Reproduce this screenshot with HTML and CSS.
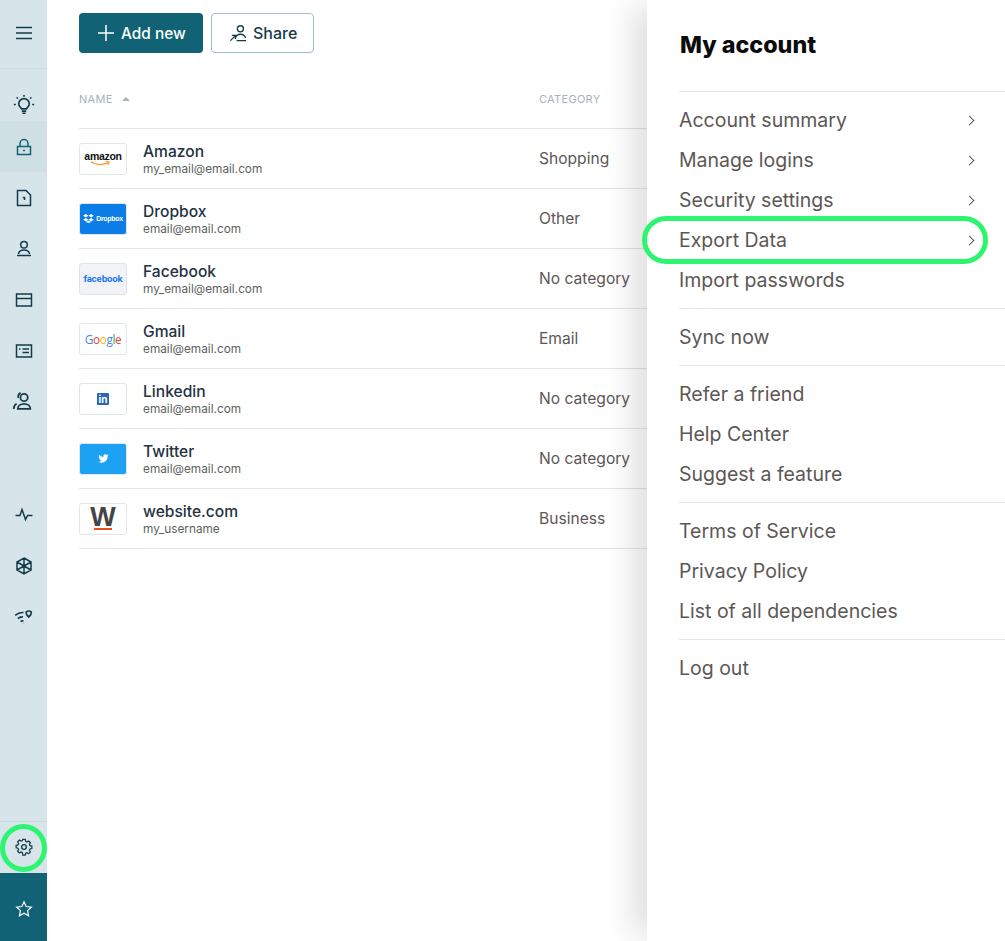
FILE: index.html
```html
<!DOCTYPE html>
<html lang="en">
<head>
    <meta charset="UTF-8">
    <meta name="viewport" content="width=device-width, initial-scale=1.0">
    <title>Logins</title>
    <link rel="stylesheet" href="styles.css">
</head>
<body>
    <nav class="sidebar">
        <div class="side-top">
            <svg class="ico" viewBox="0 0 22 22"><path d="M3 5.500h16M3 11h16M3 16.500h16"/></svg>
        </div>
        <div class="side-group">
            <div class="side-item first">
                <svg class="ico" viewBox="0 0 20 20"><path d="M7.800 13.500c-.2-1-2.600-2-2.600-4.500a4.800 4.800 0 0 1 9.600 0c0 2.500-2.400 3.500-2.600 4.500z"/><path d="M8 15.500h4M8.500 17.500h3M10 .8v1.800M3.300 3l1.100 1.100M16.700 3l-1.100 1.100M.8 9.500h1.800M17.400 9.500h1.800"/></svg>
            </div>
            <div class="side-item active">
                <svg class="ico" viewBox="0 0 22 22"><path d="M4.500 10.500h13v8h-13zM7 10.500V7.500a4 4 0 0 1 8 0v3M10 14.500h2"/></svg>
            </div>
            <div class="side-item">
                <svg class="ico" viewBox="0 0 22 22"><path d="M4.500 3.500h8.500l4.500 4.500v10.500h-13zM9.800 10.500h1.700v2.500"/></svg>
            </div>
            <div class="side-item">
                <svg class="ico" viewBox="0 0 22 22"><circle cx="11" cy="6.800" r="3.300"/><path d="M5.500 16c.3-2.500 2.500-4 5.500-4s5.200 1.500 5.500 4M4 17.500h14"/></svg>
            </div>
            <div class="side-item">
                <svg class="ico" viewBox="0 0 22 22"><path d="M3.500 5h15v12h-15zM3.500 9.500h15M6 9.500h2"/></svg>
            </div>
            <div class="side-item">
                <svg class="ico" viewBox="0 0 22 22"><path d="M3.500 5h15v12h-15zM6 9h1.500M9.500 9H16M9.500 12.500H16M18.500 5v12"/></svg>
            </div>
            <div class="side-item">
                <svg class="ico ico-lg" viewBox="0 0 20 20"><circle cx="10.500" cy="6.500" r="3.200"/><path d="M5 16.500c0-2.800 2.500-4.500 5.500-4.500s5.500 1.700 5.500 4.500zM7.500 2.500C5.500 3.500 5 5 5.500 7M1.500 16.500c0-2 .8-3.500 2.500-4.500"/></svg>
            </div>
        </div>
        <div class="side-group lower">
            <div class="side-item">
                <svg class="ico" viewBox="0 0 22 22"><path d="M2.500 11.500h4.500l2-6 3.500 10 2-4h5"/></svg>
            </div>
            <div class="side-item">
                <svg class="ico" viewBox="0 0 22 22"><path d="M11 3l7 4v8l-7 4-7-4V7zM11 11V3M11 11l7 4M11 11l-7 4M11 11L4 7M11 11l7-4M11 11v8"/></svg>
            </div>
            <div class="side-item">
                <svg class="ico ico-lg" viewBox="0 0 22 22"><path d="M3 10c2.500-2.200 5.500-3 8-2.800M5.500 13c1.500-1.300 3.300-1.800 5-1.600M8.200 15.800c.8-.6 1.800-.8 2.800-.5M11 18v.1M13.500 6.500c1.500-1 3.500-1 5 0 0 2.500-1 4-2.500 5-1.500-1-2.500-2.500-2.500-5z"/></svg>
            </div>
        </div>
        <div class="side-settings">
            <svg class="ico gear" viewBox="0 0 20 20"><circle cx="10" cy="10" r="2.600"/><path d="M8.500 2h3l.5 2.300 1.600.7 2-1.200 2.100 2.100-1.200 2 .7 1.600 2.300.5v3l-2.300.5-.7 1.600 1.200 2-2.100 2.100-2-1.200-1.600.7-.5 2.300h-3L8 17.700 6.400 17l-2 1.200-2.100-2.100 1.200-2-.7-1.600L.5 12V9l2.300-.5.7-1.600-1.200-2 2.100-2.100 2 1.200L8 3.300z" transform="translate(.8 -.2) scale(.92)"/></svg>
            <span class="ring-dot"></span>
        </div>
        <div class="side-star">
            <svg class="ico" viewBox="0 0 20 20"><path d="M10 2l2.400 5.300 5.800.6-4.300 3.900 1.200 5.700-5.100-2.900-5.100 2.900 1.200-5.700-4.300-3.900 5.800-.6z"/></svg>
        </div>
    </nav>

    <main class="content">
        <div class="actions">
            <button class="btn btn-primary">
                <svg class="btn-plus" viewBox="0 0 16 16"><path d="M8 0v16M0 8h16"/></svg>
                Add new
            </button>
            <button class="btn btn-outline">
                <svg class="btn-share" viewBox="0 0 20 20"><circle cx="12" cy="5" r="3.200"/><path d="M7 14c.6-2 2.500-3.200 5-3.200s4.400 1.200 5.500 3.700M8 17.500h10M1.500 17.500l5-5M3 12h3.800v3.800"/></svg>
                Share
            </button>
        </div>

        <div class="thead">
            <div class="col-name">Name <span class="caret"></span></div>
            <div class="col-cat">Category</div>
        </div>

        <div class="row">
            <div class="logo"><span class="l-amazon">amazon<svg viewBox="0 0 26 6"><path d="M2 1c6 4 14 4 21 1M20 .5l4 1-1.500 3"/></svg></span></div>
            <div class="who"><div class="who-name">Amazon</div><div class="who-sub">my_email@email.com</div></div>
            <div class="cat">Shopping</div>
        </div>
        <div class="row">
            <div class="logo logo-dropbox"><svg viewBox="0 0 12 10"><path d="M3 0l3 2-3 2-3-2zM9 0l3 2-3 2-3-2zM3 4.400l3 2-3 2-3-2zM9 4.400l3 2-3 2-3-2zM3 9l3-1.800L9 9l-3 1z"/></svg><span>Dropbox</span></div>
            <div class="who"><div class="who-name">Dropbox</div><div class="who-sub">email@email.com</div></div>
            <div class="cat">Other</div>
        </div>
        <div class="row">
            <div class="logo logo-fb"><span>facebook</span></div>
            <div class="who"><div class="who-name">Facebook</div><div class="who-sub">my_email@email.com</div></div>
            <div class="cat">No category</div>
        </div>
        <div class="row">
            <div class="logo"><span class="l-google"><b class="g-b">G</b><b class="g-r">o</b><b class="g-y">o</b><b class="g-b">g</b><b class="g-g">l</b><b class="g-r">e</b></span></div>
            <div class="who"><div class="who-name">Gmail</div><div class="who-sub">email@email.com</div></div>
            <div class="cat">Email</div>
        </div>
        <div class="row">
            <div class="logo logo-in"><span>in</span></div>
            <div class="who"><div class="who-name">Linkedin</div><div class="who-sub">email@email.com</div></div>
            <div class="cat">No category</div>
        </div>
        <div class="row">
            <div class="logo logo-tw"><svg viewBox="0 0 24 24"><path d="M23 5c-.8.400-1.700.600-2.600.700.900-.600 1.600-1.400 2-2.500-.900.500-1.800.900-2.900 1.100a4.600 4.600 0 0 0-7.800 4.200C8 8.300 4.600 6.500 2.400 3.700c-1.200 2.100-.600 4.800 1.400 6.100-.700 0-1.400-.200-2-.600 0 2.200 1.500 4.100 3.700 4.600-.700.200-1.400.200-2.100.100.600 1.900 2.300 3.200 4.300 3.200A9.300 9.300 0 0 1 1 19a13 13 0 0 0 20-11.700c.900-.600 1.600-1.400 2-2.300z"/></svg></div>
            <div class="who"><div class="who-name">Twitter</div><div class="who-sub">email@email.com</div></div>
            <div class="cat">No category</div>
        </div>
        <div class="row">
            <div class="logo"><span class="l-w">W</span></div>
            <div class="who"><div class="who-name">website.com</div><div class="who-sub">my_username</div></div>
            <div class="cat">Business</div>
        </div>
    </main>

    <aside class="panel">
        <h2 class="panel-title">My account</h2>
        <ul class="menu">
            <li class="has-arrow">Account summary</li>
            <li class="has-arrow">Manage logins</li>
            <li class="has-arrow">Security settings</li>
            <li class="has-arrow highlighted">Export Data</li>
            <li>Import passwords</li>
        </ul>
        <ul class="menu">
            <li>Sync now</li>
        </ul>
        <ul class="menu">
            <li>Refer a friend</li>
            <li>Help Center</li>
            <li>Suggest a feature</li>
        </ul>
        <ul class="menu">
            <li>Terms of Service</li>
            <li>Privacy Policy</li>
            <li>List of all dependencies</li>
        </ul>
        <ul class="menu">
            <li>Log out</li>
        </ul>
    </aside>
</body>
</html>
```

FILE: styles.css
```css
* { box-sizing: border-box; }
html, body { height: 100%; }
body {
    margin: 0;
    height: 941px;
    overflow: hidden;
    display: flex;
    position: relative;
    background: #fff;
    font-family: Inter, "Liberation Sans", sans-serif;
    color: #23333f;
}

/* sidebar */
.sidebar {
    width: 47px;
    height: 941px;
    flex-shrink: 0;
    background: #d7e5ea;
    display: flex;
    flex-direction: column;
}
.side-top {
    height: 69px;
    border-bottom: 1px solid #c9dbe1;
    padding-bottom: 3px;
    display: flex;
    align-items: center;
    justify-content: center;
}
.side-group.lower { padding-top: 62px; }
.side-item {
    height: 51px;
    display: flex;
    align-items: center;
    justify-content: center;
}
.side-item.first { height: 52px; padding-top: 20px; }
.side-item.active { background: #cfe0e5; }
.side-item.active .ico { stroke: #106274; }
.ico {
    width: 22px;
    height: 22px;
    fill: none;
    stroke: #123c4a;
    stroke-width: 1.500;
}
.ico-lg { width: 23px; height: 23px; }
.side-settings {
    margin-top: auto;
    height: 52px;
    border-top: 1px solid #c9dbe1;
    position: relative;
    display: flex;
    align-items: center;
    justify-content: center;
}
.gear { width: 18px; height: 18px; margin-bottom: 2px; }
.ring-dot {
    position: absolute;
    left: 0;
    top: 2px;
    width: 47px;
    height: 48px;
    border: 5px solid #2ef56f;
    border-radius: 50%;
}
.side-star {
    height: 68px;
    padding-top: 4px;
    background: #106274;
    display: flex;
    align-items: center;
    justify-content: center;
}
.side-star .ico { stroke: #fff; width: 18px; height: 18px; stroke-width: 1.300; }

/* main list */
.content {
    flex: 1;
    padding: 13px 0 0 32px;
}
.actions { display: flex; gap: 8px; }
.btn {
    height: 40px;
    border-radius: 4px;
    font-family: Inter, "Liberation Sans", sans-serif;
    font-size: 16px;
    font-weight: 500;
    display: flex;
    align-items: center;
    cursor: pointer;
}
.btn-primary {
    width: 124px;
    background: #106274;
    border: none;
    color: #fff;
    font-size: 15.400px;
    padding: 0 0 0 19px;
    gap: 7px;
}
.btn-plus { width: 16px; height: 16px; fill: none; stroke: #fff; stroke-width: 1.500; }
.btn-outline {
    width: 103px;
    background: #fff;
    border: 1px solid #9dc0ca;
    color: #123c4a;
    padding: 0 0 0 17px;
    gap: 5px;
}
.btn-share { width: 19px; height: 19px; fill: none; stroke: #123c4a; stroke-width: 1.400; }

.thead {
    height: 76px;
    border-bottom: 1px solid #e3e6e7;
    padding-top: 39px;
    display: flex;
    font-size: 11px;
    line-height: 14px;
    color: #a3b4ba;
    text-transform: uppercase;
    letter-spacing: .3px;
}
.col-name { width: 460px; }
.caret {
    display: inline-block;
    width: 0;
    height: 0;
    margin: 0 0 2px 6px;
    border-left: 4px solid transparent;
    border-right: 4px solid transparent;
    border-bottom: 4px solid #a3b4ba;
}
.row {
    height: 60px;
    border-bottom: 1px solid #e3e6e7;
    display: flex;
    align-items: center;
}
.logo {
    width: 48px;
    height: 32px;
    flex-shrink: 0;
    border: 1px solid #e3e6e7;
    border-radius: 3px;
    background: #fff;
    display: flex;
    align-items: center;
    justify-content: center;
    overflow: hidden;
}
.who { width: 396px; margin-left: 16px; }
.who-name { font-size: 15.600px; font-weight: 500; line-height: 21px; }
.who-sub { font-size: 11.800px; line-height: 14px; color: #5c5f60; }
.cat { font-size: 15.600px; margin-bottom: 1px; color: #5c5755; }

/* logos */
.l-amazon {
    font-family: "Liberation Sans", sans-serif;
    font-size: 10.500px;
    font-weight: 700;
    letter-spacing: -.3px;
    line-height: 10px;
    color: #111;
    position: relative;
    padding-bottom: 5px;
}
.l-amazon svg {
    position: absolute;
    left: 5px;
    bottom: 0;
    width: 22px;
    height: 5px;
    fill: none;
    stroke: #f59a1c;
    stroke-width: 1.500;
}
.logo-dropbox { background: #0a7de6; gap: 2px; color: #fff; }
.logo-dropbox svg { width: 11px; height: 9px; fill: #fff; }
.logo-dropbox span { font-family: "Liberation Sans", sans-serif; font-size: 7px; font-weight: 700; letter-spacing: -.3px; }
.logo-fb { background: #f1f3f7; border-color: #dfe2e8; }
.logo-fb span { font-size: 9px; font-weight: 700; color: #1877f2; letter-spacing: -.3px; }
.l-google { font-family: "Open Sans", sans-serif; font-size: 11.800px; letter-spacing: -.4px; }
.l-google b { font-weight: 500; }
.g-b { color: #4285f4; }
.g-r { color: #ea4335; }
.g-y { color: #fbbc05; }
.g-g { color: #34a853; }
.logo-in { border-color: #dbe5ee; }
.logo-in span {
    width: 12px;
    height: 12px;
    background: #2867b2;
    color: #fff;
    font-size: 10px;
    font-weight: 700;
    line-height: 12px;
    text-align: center;
    border-radius: 1px;
}
.logo-tw { background: #1da1f2; }
.logo-tw svg { width: 11px; height: 11px; fill: #fff; }
.l-w {
    font-family: "Liberation Sans", sans-serif;
    font-size: 27px;
    font-weight: 700;
    line-height: 21px;
    color: #444;
    text-align: center;
}
.l-w::after {
    content: "";
    display: block;
    width: 18px;
    height: 2px;
    margin: 0 auto;
    background: #e8501f;
}

/* account drawer */
.panel {
    position: absolute;
    top: 0;
    right: 0;
    width: 358px;
    height: 941px;
    background: #fff;
    box-shadow: -20px 0 30px -6px rgba(0,0,0,0.13);
    padding-left: 32px;
}
.panel-title {
    margin: 0;
    height: 92px;
    border-bottom: 1px solid #e3e6e7;
    padding: 29px 0 0 1px;
    font-family: Inter, sans-serif;
    font-size: 23.300px;
    font-weight: 800;
    line-height: 32px;
    color: #0b0b0b;
}
.menu {
    list-style: none;
    margin: 0;
    padding: 8px 0;
    border-bottom: 1px solid #e3e6e7;
}
.menu:last-child { border-bottom: none; }
.menu li {
    height: 40px;
    line-height: 40px;
    font-size: 19.500px;
    color: #5c5755;
    position: relative;
}
.has-arrow::after {
    content: "";
    position: absolute;
    left: 287px;
    top: 17px;
    width: 6px;
    height: 6px;
    border-top: 1px solid #5c5755;
    border-right: 1px solid #5c5755;
    transform: rotate(45deg);
}
.highlighted::before {
    content: "";
    position: absolute;
    left: -37px;
    top: -4px;
    width: 336px;
    height: 38px;
    border: 5px solid #2ef56f;
    border-radius: 24px;
}
```
